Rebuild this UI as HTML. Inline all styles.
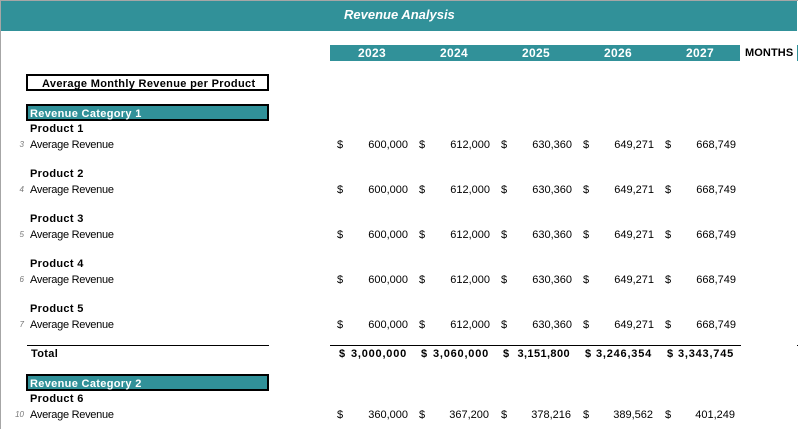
<!DOCTYPE html>
<html>
<head>
<meta charset="utf-8">
<style>
html,body{margin:0;padding:0;background:#fff}
body{width:798px;height:429px;position:relative;overflow:hidden;font-family:"Liberation Sans",sans-serif;color:#000;font-size:11px}
.a{position:absolute;white-space:nowrap;line-height:14px;height:14px;margin-top:1px}
.h{margin-top:0}
.b{font-weight:bold;letter-spacing:.33px}
.t{letter-spacing:.78px}
.l{letter-spacing:-.28px}
.r{text-align:right;width:70px}
.n{font-style:italic;font-size:8px;color:#777;width:12px;text-align:right;left:12px}
.box{position:absolute;left:26px;width:243px;height:17px;box-sizing:border-box;border:2px solid #000}
.teal{background:#319199}
</style>
</head>
<body>
<div style="position:absolute;left:0;top:0;width:798px;height:1px;background:#a6a6a6"></div>
<div style="position:absolute;left:0;top:0;width:1px;height:429px;background:#a6a6a6"></div>
<div class="teal" style="position:absolute;left:1px;top:1px;width:796px;height:30px"></div>
<div class="a h" style="left:344px;top:7px;font-size:13px;line-height:16px;height:16px;font-weight:bold;font-style:italic;color:#fff;">Revenue Analysis</div>

<div class="teal" style="position:absolute;left:330px;top:45px;width:410px;height:16px"></div>
<div class="a b h" style="left:358px;top:46px;color:#fff;font-size:12px">2023</div>
<div class="a b h" style="left:440px;top:46px;color:#fff;font-size:12px">2024</div>
<div class="a b h" style="left:522px;top:46px;color:#fff;font-size:12px">2025</div>
<div class="a b h" style="left:604px;top:46px;color:#fff;font-size:12px">2026</div>
<div class="a b h" style="left:686px;top:46px;color:#fff;font-size:12px">2027</div>
<div class="a b h" style="left:745px;top:46px;letter-spacing:.1px">MONTHS</div>
<div style="position:absolute;left:797px;top:45px;width:1px;height:16px;background:#319199"></div>

<div class="box" style="top:74px"></div>
<div class="a b" style="left:42px;top:76px">Average Monthly Revenue per Product</div>

<div class="box teal" style="top:104px"></div>
<div class="a b" style="left:30px;top:106px;color:#fff">Revenue Category 1</div>

<div class="a b" style="left:30px;top:121px">Product 1</div>
<div class="a n" style="top:137px">3</div>
<div class="a l" style="left:30px;top:137px">Average Revenue</div>
<div class="a" style="left:337px;top:137px">$</div><div class="a r" style="left:338px;top:137px">600,000</div>
<div class="a" style="left:419px;top:137px">$</div><div class="a r" style="left:420px;top:137px">612,000</div>
<div class="a" style="left:501px;top:137px">$</div><div class="a r" style="left:502px;top:137px">630,360</div>
<div class="a" style="left:583px;top:137px">$</div><div class="a r" style="left:584px;top:137px">649,271</div>
<div class="a" style="left:665px;top:137px">$</div><div class="a r" style="left:666px;top:137px">668,749</div>

<div class="a b" style="left:30px;top:166px">Product 2</div>
<div class="a n" style="top:182px">4</div>
<div class="a l" style="left:30px;top:182px">Average Revenue</div>
<div class="a" style="left:337px;top:182px">$</div><div class="a r" style="left:338px;top:182px">600,000</div>
<div class="a" style="left:419px;top:182px">$</div><div class="a r" style="left:420px;top:182px">612,000</div>
<div class="a" style="left:501px;top:182px">$</div><div class="a r" style="left:502px;top:182px">630,360</div>
<div class="a" style="left:583px;top:182px">$</div><div class="a r" style="left:584px;top:182px">649,271</div>
<div class="a" style="left:665px;top:182px">$</div><div class="a r" style="left:666px;top:182px">668,749</div>

<div class="a b" style="left:30px;top:211px">Product 3</div>
<div class="a n" style="top:227px">5</div>
<div class="a l" style="left:30px;top:227px">Average Revenue</div>
<div class="a" style="left:337px;top:227px">$</div><div class="a r" style="left:338px;top:227px">600,000</div>
<div class="a" style="left:419px;top:227px">$</div><div class="a r" style="left:420px;top:227px">612,000</div>
<div class="a" style="left:501px;top:227px">$</div><div class="a r" style="left:502px;top:227px">630,360</div>
<div class="a" style="left:583px;top:227px">$</div><div class="a r" style="left:584px;top:227px">649,271</div>
<div class="a" style="left:665px;top:227px">$</div><div class="a r" style="left:666px;top:227px">668,749</div>

<div class="a b" style="left:30px;top:256px">Product 4</div>
<div class="a n" style="top:272px">6</div>
<div class="a l" style="left:30px;top:272px">Average Revenue</div>
<div class="a" style="left:337px;top:272px">$</div><div class="a r" style="left:338px;top:272px">600,000</div>
<div class="a" style="left:419px;top:272px">$</div><div class="a r" style="left:420px;top:272px">612,000</div>
<div class="a" style="left:501px;top:272px">$</div><div class="a r" style="left:502px;top:272px">630,360</div>
<div class="a" style="left:583px;top:272px">$</div><div class="a r" style="left:584px;top:272px">649,271</div>
<div class="a" style="left:665px;top:272px">$</div><div class="a r" style="left:666px;top:272px">668,749</div>

<div class="a b" style="left:30px;top:301px">Product 5</div>
<div class="a n" style="top:317px">7</div>
<div class="a l" style="left:30px;top:317px">Average Revenue</div>
<div class="a" style="left:337px;top:317px">$</div><div class="a r" style="left:338px;top:317px">600,000</div>
<div class="a" style="left:419px;top:317px">$</div><div class="a r" style="left:420px;top:317px">612,000</div>
<div class="a" style="left:501px;top:317px">$</div><div class="a r" style="left:502px;top:317px">630,360</div>
<div class="a" style="left:583px;top:317px">$</div><div class="a r" style="left:584px;top:317px">649,271</div>
<div class="a" style="left:665px;top:317px">$</div><div class="a r" style="left:666px;top:317px">668,749</div>

<div style="position:absolute;left:27px;top:345px;width:242px;height:1px;background:#000"></div>
<div style="position:absolute;left:330px;top:345px;width:411px;height:1px;background:#000"></div>
<div style="position:absolute;left:797px;top:345px;width:1px;height:1px;background:#000"></div>
<div class="a b" style="left:31px;top:346px">Total</div>
<div class="a b" style="left:339px;top:346px">$</div><div class="a b t r" style="left:337px;top:346px">3,000,000</div>
<div class="a b" style="left:421px;top:346px">$</div><div class="a b t r" style="left:419px;top:346px">3,060,000</div>
<div class="a b" style="left:503px;top:346px">$</div><div class="a b r" style="left:500px;top:346px;letter-spacing:.4px">3,151,800</div>
<div class="a b" style="left:585px;top:346px">$</div><div class="a b t r" style="left:582px;top:346px">3,246,354</div>
<div class="a b" style="left:667px;top:346px">$</div><div class="a b t r" style="left:664px;top:346px">3,343,745</div>

<div class="box teal" style="top:374px"></div>
<div class="a b" style="left:30px;top:376px;color:#fff">Revenue Category 2</div>

<div class="a b" style="left:30px;top:391px">Product 6</div>
<div class="a n" style="top:407px">10</div>
<div class="a l" style="left:30px;top:407px">Average Revenue</div>
<div class="a" style="left:337px;top:407px">$</div><div class="a r" style="left:338px;top:407px">360,000</div>
<div class="a" style="left:419px;top:407px">$</div><div class="a r" style="left:419px;top:407px">367,200</div>
<div class="a" style="left:501px;top:407px">$</div><div class="a r" style="left:501px;top:407px">378,216</div>
<div class="a" style="left:583px;top:407px">$</div><div class="a r" style="left:583px;top:407px">389,562</div>
<div class="a" style="left:665px;top:407px">$</div><div class="a r" style="left:665px;top:407px">401,249</div>
</body>
</html>
